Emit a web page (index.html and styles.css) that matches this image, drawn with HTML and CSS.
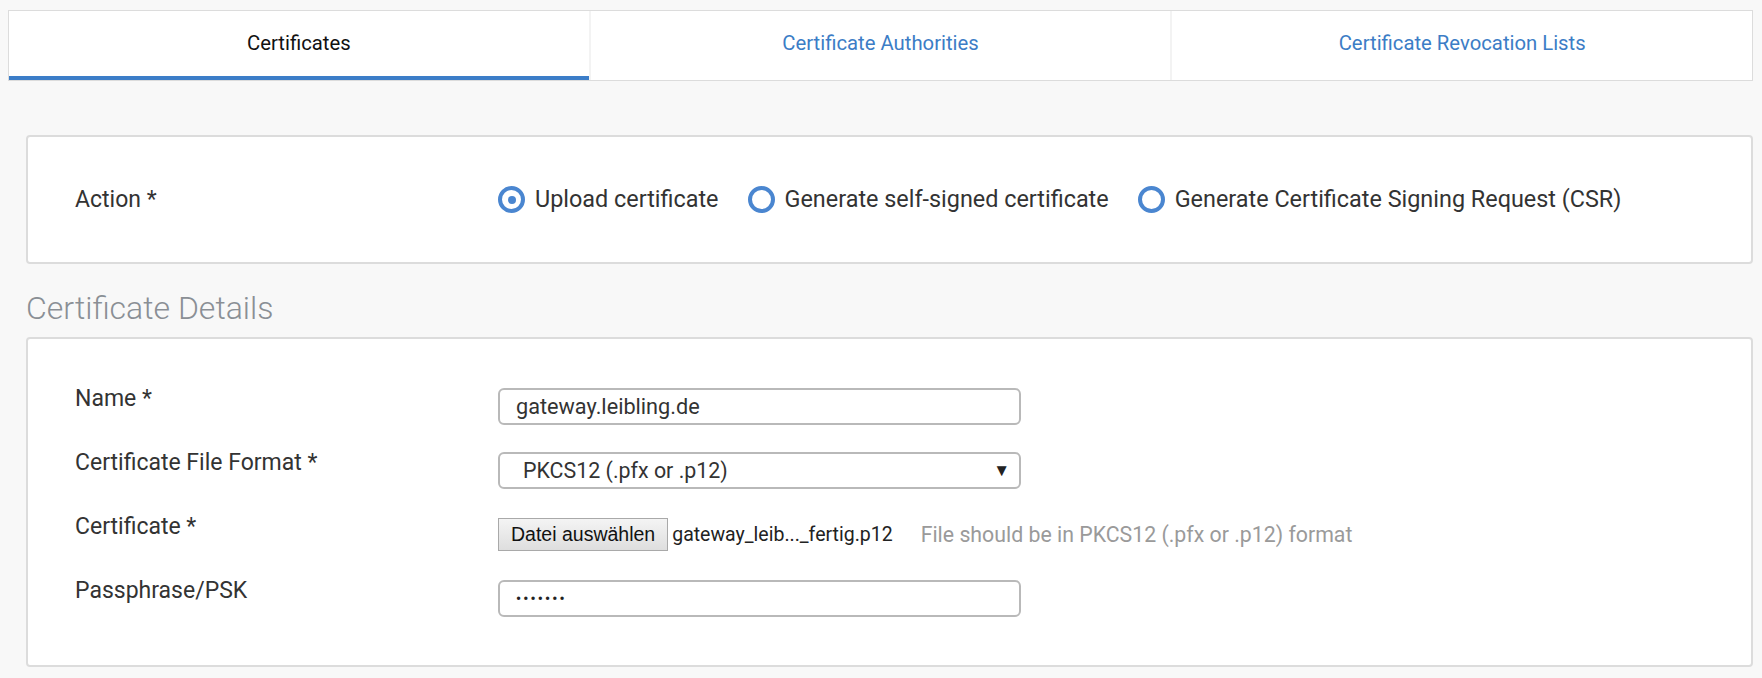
FILE: index.html
```html
<!DOCTYPE html>
<html lang="en">
<head>
<meta charset="utf-8">
<title>Certificates</title>
<link rel="stylesheet" href="styles.css">
</head>
<body>
<div class="page">
  <nav class="tabs">
    <a class="tab active">Certificates</a>
    <a class="tab">Certificate Authorities</a>
    <a class="tab">Certificate Revocation Lists</a>
  </nav>

  <div class="content">
    <section class="card action-card">
      <div class="row">
        <div class="label">Action *</div>
        <div class="radios">
          <label class="radio"><span class="ring checked"></span><span class="radio-text">Upload certificate</span></label>
          <label class="radio"><span class="ring"></span><span class="radio-text">Generate self-signed certificate</span></label>
          <label class="radio"><span class="ring"></span><span class="radio-text">Generate Certificate Signing Request (CSR)</span></label>
        </div>
      </div>
    </section>

    <h2 class="section-title">Certificate Details</h2>

    <section class="card details-card">
      <div class="row form-row">
        <div class="label">Name *</div>
        <input class="field" type="text" value="gateway.leibling.de">
      </div>
      <div class="row form-row">
        <div class="label">Certificate File Format *</div>
        <div class="field select"><span>PKCS12 (.pfx or .p12)</span><span class="arrow">▼</span></div>
      </div>
      <div class="row form-row">
        <div class="label">Certificate *</div>
        <div class="file">
          <button class="file-btn" type="button">Datei auswählen</button>
          <span class="file-name">gateway_leib..._fertig.p12</span>
          <span class="hint">File should be in PKCS12 (.pfx or .p12) format</span>
        </div>
      </div>
      <div class="row form-row">
        <div class="label">Passphrase/PSK</div>
        <div class="field password"><span class="dots">•••••••</span></div>
      </div>
    </section>
  </div>
</div>
</body>
</html>
```

FILE: styles.css
```css
* { box-sizing: border-box; }

html, body {
  margin: 0;
  background: #f8f8f8;
  font-family: Roboto, "Liberation Sans", sans-serif;
  color: #333;
}

.page {
  padding: 10px 9px 0 8px;
}

.tabs {
  display: flex;
  background: #fff;
  border: 1px solid #dcdcdc;
}

.tab {
  flex: 1;
  height: 69px;
  padding-top: 21px;
  line-height: 22px;
  font-size: 20.3px;
  text-align: center;
  color: #3c7dc6;
  border-left: 2px solid #f3f3f3;
}

.tab:first-child { border-left: none; }

.tab.active {
  color: #111;
  border-bottom: 4px solid #3b7dc8;
}

.content {
  margin: 54px 0 0 18px;
}

.card {
  background: #fff;
  border: 2px solid #dcdcdc;
  border-radius: 4px;
}

.action-card {
  padding: 49px 47px;
}

.row {
  display: flex;
  align-items: center;
}

.label {
  width: 423px;
  flex: none;
  font-size: 23px;
  line-height: 22px;
  color: #333;
}

.radios {
  display: flex;
  align-items: center;
  gap: 29px;
}

.radio {
  display: flex;
  align-items: center;
  gap: 10px;
  font-size: 23.4px;
  line-height: 23px;
  color: #333;
}

.ring {
  width: 27px;
  height: 27px;
  border: 4px solid #4a86d0;
  border-radius: 50%;
  display: flex;
  align-items: center;
  justify-content: center;
}

.ring.checked::after {
  content: "";
  width: 8px;
  height: 8px;
  border-radius: 50%;
  background: #4a86d0;
}

.section-title {
  margin: 26px 0 11px;
  font-size: 32px;
  line-height: 36px;
  font-weight: 300;
  color: #8a8f95;
}

.details-card {
  padding: 49px 47px 48px;
  display: flex;
  flex-direction: column;
  gap: 27px;
}

.form-row {
  align-items: flex-start;
  height: 37px;
}

.field {
  width: 523px;
  height: 37px;
  border: 2px solid #b9b9b9;
  border-radius: 6px;
  background: #fff;
  padding: 0 16px;
  font-family: Roboto, "Liberation Sans", sans-serif;
  font-size: 21.7px;
  color: #333;
  outline: none;
}

.select {
  display: flex;
  align-items: center;
  justify-content: space-between;
  padding: 0 9px 0 23px;
  font-size: 21.4px;
}

.arrow {
  font-size: 17px;
  color: #222;
}

.password {
  display: flex;
  align-items: center;
}

.dots {
  font-size: 14px;
  font-weight: 700;
  letter-spacing: 2.2px;
  color: #222;
}

.file {
  display: flex;
  align-items: center;
  height: 37px;
}

.file-btn {
  height: 33px;
  padding: 0 12px;
  border: 1px solid #a9a9a9;
  border-radius: 0;
  background: linear-gradient(#f4f4f4, #dedede);
  font-family: "Liberation Sans", Arial, sans-serif;
  font-size: 19.5px;
  color: #111;
}

.file-name {
  margin-left: 4px;
  font-size: 19.5px;
  color: #222;
}

.hint {
  margin-left: 28px;
  font-size: 21.3px;
  color: #9a9a9a;
}
```
